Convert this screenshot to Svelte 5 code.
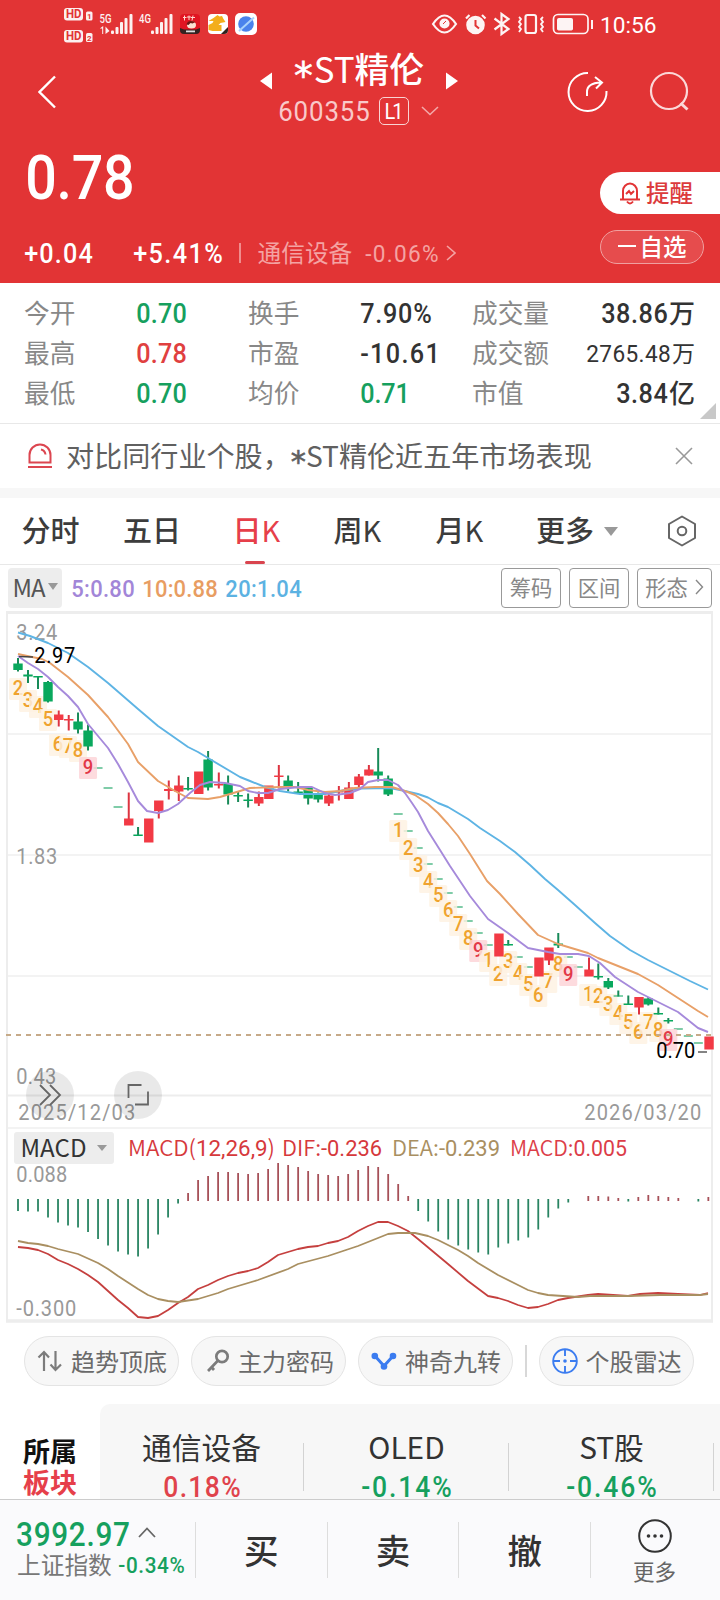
<script>
  const RED = '#e23435';
  const GREEN = '#16a05e';

  const stats = [
    [{ k: '今开', v: '0.70', w: 49, c: GREEN }, { k: '换手', v: '7.90%', w: 70 }, { k: '成交量', v: '38.86', w: 65, u: '万' }],
    [{ k: '最高', v: '0.78', w: 49, c: '#e0403f' }, { k: '市盈', v: '-10.61', w: 78 }, { k: '成交额', v: '2765.48', w: 83, u: '万', small: true }],
    [{ k: '最低', v: '0.70', w: 49, c: GREEN }, { k: '均价', v: '0.71', w: 48, c: GREEN }, { k: '市值', v: '3.84', w: 50, u: '亿' }]
  ];

  // [index, kind, bodyTop, bodyBottom, wickTop, wickBottom]
  const candles = [
    [0, 'g', 663.5, 670, 658, 671.5], [1, 'g', 674.5, 676.5, 670, 683], [2, 'g', 676, 677.5, 676, 689],
    [3, 'g', 682, 701.5, 681, 702.5], [4, 'r', 714.5, 720, 710.5, 726.5], [5, 'r', 719, 720.5, 715, 730.5],
    [6, 'g', 721.5, 729.5, 712.5, 733.5], [7, 'g', 730.5, 746.5, 724.5, 750.5],
    [11, 'r', 818.5, 825.5, 792.5, 825], [12, 'g', 834.5, 836, 827, 836], [13, 'r', 818.5, 842.5, 819, 842],
    [14, 'r', 800.5, 811, 801, 818.5], [15, 'r', 789, 791, 780.5, 799.5], [16, 'r', 785.5, 791.5, 775.5, 801],
    [17, 'g', 788, 789.5, 777, 790.5], [18, 'r', 771.5, 794, 772, 794], [19, 'g', 759.5, 787.5, 751, 790.5],
    [20, 'r', 784, 785.5, 772.5, 788.5], [21, 'g', 784, 794.5, 775.5, 804.5], [22, 'g', 795, 796.5, 791.5, 802],
    [23, 'g', 799.5, 801, 793.5, 807.5], [24, 'r', 797, 803.5, 791.5, 806], [25, 'r', 785.5, 799, 786, 799],
    [26, 'r', 775.5, 777, 765, 788.5], [27, 'g', 780.5, 787.5, 775.5, 791.5], [28, 'g', 791.5, 793, 782, 793.5],
    [29, 'g', 788, 798.5, 786, 804.5], [30, 'g', 795, 799.5, 792.5, 802.5], [31, 'r', 795.5, 803.5, 793.5, 806],
    [32, 'r', 791, 792.5, 786, 800.5], [33, 'r', 787.5, 799, 782, 799], [34, 'r', 776.5, 785, 774, 787.5],
    [35, 'r', 769.5, 775.5, 765, 775.5], [36, 'g', 771.5, 775.5, 748, 781.5], [37, 'g', 778.5, 794.5, 775.5, 796],
    [48, 'r', 933.5, 956.5, 934, 956], [49, 'g', 944, 945.5, 940, 945.5], [52, 'r', 957.5, 976.5, 958, 976],
    [53, 'r', 947.5, 960.5, 948, 965], [54, 'g', 943.5, 945.5, 933, 948], [57, 'r', 969.5, 976.5, 957.5, 976],
    [58, 'g', 976, 977.5, 963.5, 979.5], [59, 'g', 981, 987.5, 978, 989], [60, 'g', 995.5, 996.5, 990.5, 996.5],
    [61, 'g', 1003.5, 1005, 995.5, 1005], [62, 'r', 997, 1007.5, 997, 1014.5], [63, 'g', 998.5, 1004.5, 997, 1005.5],
    [64, 'g', 1013, 1014.5, 1007.5, 1014.5], [65, 'g', 1020, 1021.5, 1018, 1023.5], [69, 'r', 1036.5, 1049.5, 1037, 1049]
  ];

  const limits = [
    [8, 768], [9, 788], [10, 807], [38, 814], [39, 831], [40, 848], [41, 864], [42, 879], [43, 893], [44, 907],
    [45, 921], [46, 933], [47, 945], [50, 957], [51, 967], [55, 957], [56, 967], [66, 1029], [67, 1036], [68, 1043]
  ];

  // [index, digit, centre y]
  const marks = [
    [0, 2, 688], [1, 3, 700], [2, 4, 706], [3, 5, 719], [4, 6, 744], [5, 7, 746], [6, 8, 750], [7, 9, 767],
    [38, 1, 830], [39, 2, 848], [40, 3, 865], [41, 4, 881], [42, 5, 895], [43, 6, 910], [44, 7, 924], [45, 8, 938], [46, 9, 950],
    [47, 1, 960], [48, 2, 974], [49, 3, 961], [50, 4, 973], [51, 5, 984], [52, 6, 995], [53, 7, 981], [54, 8, 964], [55, 9, 974],
    [57, 1, 994], [58, 2, 996], [59, 3, 1004], [60, 4, 1013], [61, 5, 1022], [62, 6, 1032], [63, 7, 1022], [64, 8, 1030], [65, 9, 1039]
  ];

  const ma20 = '18,632.5 30,636 48,643 68,653 88,667 108,683 138,709 158,726 188,747 198,752 208,758 240,777 250,781 265,787 280,791 300,794 325,794 345,790 362,788.5 390,788 405,791 418,794 428,797.5 438,803 448,807 458,813 468,819 480,828 500,841 515,852 530,865 545,879 558,890 575,905 595,923 610,936 630,950 648,960 670,971 690,981 708,989.5';
  const ma10 = '18,654 32,657 42,659 50,663 68,677 88,695 108,717 128,744 138,762 158,781 175,791 188,798 208,799 220,797 240,791 250,788 280,787 295,787 308,790 325,792 340,791 355,788 375,787 392,787 405,791 415,795 428,804 438,813 448,824 458,836 470,854 487,881 500,894 518,914 538,935 558,944 588,953 598,958 618,966 638,974 658,985 678,998 698,1011 708,1017';
  const ma5 = '18,656 28,663 38,669 48,677 58,687 68,696 78,707 88,724 98,736 108,748 118,764 128,782 138,801 147,811 158,813 168,810 178,804 190,793 200,785 210,782 225,783 240,786 248,791 258,793 268,793 280,789 300,787 312,787 325,793 335,795 350,793 360,789 368,782 378,780 388,780 398,785 405,793 412,803 418,812 428,831 440,850 450,866 460,881 470,896 488,919 508,933 528,948 548,952 560,954 578,954 589,956 600,963 615,977 638,992 658,1002 678,1012 698,1028 708,1032';

  const dif = '18,1247 28,1248 38,1250 48,1254 58,1260 68,1264 78,1269 88,1275 98,1282 108,1291 118,1300 128,1308 138,1317 148,1318 158,1316 168,1310 178,1303 188,1297 198,1289 208,1285 218,1280 228,1276 238,1273 248,1271 258,1268 268,1262 278,1255 288,1252 298,1249 308,1247 318,1246 328,1243 338,1241 348,1237 358,1231 368,1226 378,1222 388,1222 398,1226 408,1231 418,1239 448,1264 468,1281 488,1296 498,1298 508,1301 518,1305 528,1308 538,1307 548,1304 558,1300 568,1298 588,1295 598,1294 628,1296 640,1294 658,1293 678,1294 700,1295 708,1293';
  const dea = '18,1241 28,1243 38,1244 48,1246 58,1249 78,1254 98,1263 108,1269 118,1276 138,1289 148,1295 158,1299 168,1301 178,1302 198,1299 218,1293 228,1289 258,1280 288,1269 298,1264 328,1256 358,1246 378,1238 388,1234 398,1233 415,1233 428,1236 438,1240 458,1250 468,1256 478,1263 498,1275 518,1285 528,1290 538,1293 548,1295 578,1297 590,1296 628,1296 660,1295 700,1295 708,1294';

  // Signed bar lengths in pixels, positive above the zero line; null leaves a gap.
  const hist = [-12, -12.5, -12.5, -18.5, -23.5, -26.5, -28.5, -33, -40, -46.5, -52.5, -55.5, -57.5, -49.5, -35.5, -18.5, -4.5,
    8, 21, 25, 29, 29, 28, 27, 28, 32, 38, 36, 34, 30, 27, 26, 25, 27, 31, 35, 34, 27, 17, 5,
    -12, -22.5, -32.5, -40.5, -46.5, -50.5, -53.5, -55.5, -48.5, -44.5, -41.5, -38.5, -30.5, -18.5, -9.5, -3.5, null,
    5, 5, 4.5, 3, -2.5, 4, 6, 5, 4, 3, null, -2.5, 4];

  const px = (i) => 18 + i * 10.005;

  // Horizontal squeeze that turns the numerals into a narrower face.
  const SQ = 0.92;

  const tabs = [
    { t: '分时', x: 21.5 }, { t: '五日', x: 123 }, { t: '日', k: true, x: 232.5, on: true },
    { t: '周', k: true, x: 333.5 }, { t: '月', k: true, x: 435.5 }, { t: '更多', x: 536 }
  ];
  const sectors = [
    { n: '通信设备', p: '0.18%', w: 76, c: '#e0434b' },
    { n: 'OLED', p: '-0.14%', w: 89, c: GREEN },
    { n: 'ST股', p: '-0.46%', w: 89, c: GREEN }
  ];
</script>

{#snippet fit(t, w, cap, color = '#333', weight = 500)}
  <svg class="fit" width={w} height={cap}>
    <text transform="scale({SQ} 1)" x={(-cap * 0.04) / SQ} y={cap} textLength={(w + cap * 0.08) / SQ} lengthAdjust="spacing" font-size={cap / 0.711} fill={color} font-weight={weight}>{t}</text>
  </svg>
{/snippet}

{#snippet label(t, x, y, w, color, weight = 400, cap = 15.5)}
  <text class="num" transform="translate({x + 0.3} {y}) scale({SQ} 1)" textLength={w / SQ} lengthAdjust="spacing" font-size={cap / 0.711} fill={color} font-weight={weight}>{t}</text>
{/snippet}

<div class="page">
  <header>
    <div class="status">
      <svg width="720" height="50" fill="#fff">
        <g opacity=".93">
          <rect x="64" y="8" width="19" height="12.5" rx="3" />
          <rect x="64" y="30" width="19" height="12.5" rx="3" />
          <rect x="86" y="11.5" width="6.5" height="9" rx="1.5" />
          <rect x="86" y="33" width="6.5" height="9" rx="1.5" />
          <g class="num" font-weight="700" fill={RED}>
            <text x="66" y="18.4" font-size="12" textLength="15.5" lengthAdjust="spacingAndGlyphs">HD</text>
            <text x="66" y="40.4" font-size="12" textLength="15.5" lengthAdjust="spacingAndGlyphs">HD</text>
            <text x="87" y="19" font-size="8">1</text>
            <text x="87" y="40.5" font-size="8">2</text>
          </g>
          <g class="num" font-weight="500" font-size="13">
            <text x="99.500" y="23" textLength="12" lengthAdjust="spacingAndGlyphs">5G</text>
            <text x="139" y="23" textLength="12" lengthAdjust="spacingAndGlyphs">4G</text>
          </g>
          <path d="M102.200 34v-5.500h-2.400l3.400-2.500v8zM105.500 26.500v7.500l4-3z" />
          {#each [111, 151] as x}
            <rect {x} y="30.500" width="3" height="3.500" rx="1" />
            <rect x={x + 4.500} y="27" width="3" height="7" rx="1" />
            <rect x={x + 9} y="22" width="3" height="12" rx="1" />
            <rect x={x + 13.500} y="18" width="3" height="16" rx="1" />
            <rect x={x + 18.500} y="14" width="3" height="20" rx="1" />
          {/each}
        </g>
        <rect x="180" y="14" width="20" height="20" rx="4" fill="#e11522" />
        <path d="M180 28l4 1.500h12l4-1.500v2a4 4 0 0 1-4 4h-12a4 4 0 0 1-4-4z" fill="#342220" />
        <path d="M183 17.500h3.500m-2-2v5m4.500-5v4.500m-2-3h4m2-1.500l-1 5m-1-3h4" stroke="#ffd9cf" stroke-width="1" fill="none" />
        <ellipse cx="191.500" cy="25" rx="4.500" ry="3.500" fill="#fbe0d2" />
        <path d="M186.500 24.500q1-5.500 9-2.500l-3 1.500-2-.5-2 2z" fill="#6c1714" />
        <rect x="186" y="30.500" width="9" height="1.800" fill="#ddd" />
        <rect x="208" y="14" width="20" height="20" rx="4" />
        <path d="M208.500 21l5-3 4-3 2 1.500 2.500-.5 1.500 3 2 3-5 1-2 2h3v6h-9l-4-1v-5l4-2 1-2h-4z" fill="#f3ae1c" />
        <path d="M228 27v3a4 4 0 0 1-4 4h-3z" fill="#30231d" />
        <rect x="235" y="13" width="22" height="22" rx="5" />
        <circle cx="246" cy="24" r="7.800" fill="#4a82ec" />
        <path d="M239 31L254 17.500" stroke="#a9d2fb" stroke-width="2" />
        <g fill="none" stroke="#fff" stroke-width="2.200" opacity=".95">
          <path d="M433 24q11.500-17 23 0q-11.500 17-23 0z" />
          <circle cx="444.500" cy="23.500" r="4" fill="#fff" />
          <path d="M443 24l3-3" stroke={RED} stroke-width="1" />
          <circle cx="475.500" cy="25" r="8.200" fill="#fff" />
          <path d="M466 18.500l3.500-3.500m12.500 0l3.500 3.500" />
          <path d="M475.500 20v5.500l3.500 3" stroke={RED} stroke-width="2" />
          <path d="M494.500 18.500l14 10.500-7 5v-20l7 5-14 10.500" />
          <rect x="525.500" y="15" width="10.500" height="18" rx="2" />
          <path d="M519 17l2 2-2 3 2 2-2 3 2 2-2 3M543 17l-2 2 2 3-2 2 2 3-2 2 2 3" stroke-width="1.800" />
          <rect x="553.500" y="14.500" width="34.500" height="19" rx="4.500" stroke-width="1.700" />
          <rect x="557.500" y="18.500" width="15" height="11.500" rx="1" fill="#fff" stroke-width="1" />
          <path d="M592 20v9" stroke-width="2" />
        </g>
        <text class="num" x="600" y="32.800" font-size="22.500" textLength="56.500" lengthAdjust="spacingAndGlyphs">10:56</text>
      </svg>
    </div>

    <div class="title-row">
      <svg class="back" width="22" height="34" fill="none" stroke="#fff" stroke-width="2.400"><path d="M17 1.500L1.500 17 17 32.500" /></svg>
      <div class="title-block">
        <div class="title-line">
          <svg width="12" height="18" fill="#fff"><path d="M0 9L12 .5v17z" /></svg>
          <span class="title"><span class="star">*</span>ST<b>精伦</b></span>
          <svg width="12" height="18" fill="#fff"><path d="M12 9L0 .5v17z" /></svg>
        </div>
        <div class="code-line">
          {@render fit('600355', 90, 20, '#f9c9c9', 400)}
          <span class="level">{@render fit('L1', 18, 15.5, '#fff', 400)}</span>
          <svg width="18" height="10" fill="none" stroke="#f3a9a9" stroke-width="1.600"><path d="M1 1l8 7.500L17 1" /></svg>
        </div>
      </div>
      <svg class="share" width="42" height="42" fill="none" stroke="#fff" stroke-width="2">
        <path d="M21 2a19 19 0 1 0 18.500 18" />
        <path d="M20 25v-4q0-9 14-9.500M28 6l7 5.500-6 6" />
      </svg>
      <svg class="search" width="42" height="42" fill="none" stroke="#fbd8d8" stroke-width="2.200">
        <circle cx="20" cy="20" r="18" /><path d="M31.500 32l7 6.500" stroke-width="3" />
      </svg>
    </div>

    <div class="price-row">
      {@render fit('0.78', 106, 43, '#fff', 500)}
      <div class="alert">
        <svg width="22" height="25" fill="none" stroke={RED} stroke-width="2">
          <path d="M4 18V10a7 7.500 0 0 1 14 0v8M1 18.500h20M8 20.500q3 4 6 0M7 13l3-3 2 3 3-3" />
        </svg>
        <span>提醒</span>
      </div>
    </div>

    <div class="change-row">
      {@render fit('+0.04', 67, 19.5, '#fff', 500)}
      <span class="pct">{@render fit('+5.41%', 88, 19.5, '#fff', 500)}</span>
      <i></i>
      <span class="industry">通信设备</span>
      {@render fit('-0.06%', 72, 17.5, '#f4a3a3', 400)}
      <svg class="chev" width="10" height="16" fill="none" stroke="#f4a3a3" stroke-width="1.600"><path d="M1 1l8 7-8 7" /></svg>
      <div class="watch"><b></b>自选</div>
    </div>
  </header>

  <section class="stats">
    {#each stats as row}
      <div class="stat-row">
        {#each row as s}
          <span class="k">{s.k}</span>
          <span class="v">{@render fit(s.v, s.w, s.small ? 17.5 : 19.5, s.c ?? '#333', s.small ? 400 : 500)}{#if s.u}<em class:small={s.small}>{s.u}</em>{/if}</span>
        {/each}
      </div>
    {/each}
    <svg class="corner" width="16" height="16" fill="#c8c8c8"><path d="M16 0v16H0z" /></svg>
  </section>

  <section class="notice">
    <svg width="26" height="26" fill="none" stroke="#dc4650" stroke-width="2">
      <path d="M2.500 19.500V12a10.500 10.500 0 0 1 21 0v7.500zM1 24h24M14 6.500q4 1 4.500 5" />
    </svg>
    <span>对比同行业个股，<span class="star">*</span>ST精伦近五年市场表现</span>
    <svg class="close" width="18" height="18" fill="none" stroke="#999" stroke-width="1.600"><path d="M1 1l16 16M17 1L1 17" /></svg>
  </section>
  <div class="band"></div>

  <nav>
    <svg width="720" height="67">
      {#each tabs as t}
        <text class="cjk" x={t.x} y="44" font-size="29" font-weight="500" fill={t.on ? '#e63f4a' : '#3c3c3c'}>{t.t}{#if t.k}<tspan font-weight="400">K</tspan>{/if}</text>
      {/each}
      <path d="M604 29h14l-7 9z" fill="#999" />
      <rect x="245" y="63" width="20" height="3" rx="1.500" fill="#d9444e" />
      <path d="M682 18.500l13 7.500v14l-13 7.500-13-7.500v-14z" fill="none" stroke="#666" stroke-width="2" stroke-linejoin="round" />
      <circle cx="682" cy="33" r="4.300" fill="none" stroke="#666" stroke-width="2" />
    </svg>
  </nav>

  <section class="ma">
    <span class="select">MA<svg width="10" height="7" fill="#999"><path d="M0 0h10L5 7z" /></svg></span>
    {@render fit('5:0.80', 62, 17, '#a286d8', 500)}
    {@render fit('10:0.88', 74, 17, '#e89d62', 500)}
    {@render fit('20:1.04', 75, 17, '#5cb2e2', 500)}
    <div class="btns">
      <span>筹码</span><span>区间</span><span class="wide">形态<svg width="9" height="16" fill="none" stroke="#888" stroke-width="1.400"><path d="M1 1l6.500 7L1 15" /></svg></span>
    </div>
  </section>

  <svg class="chart" width="720" height="714" viewBox="0 610 720 714">
    <g fill="none" stroke="#ededed" stroke-width="2">
      <path d="M6 612.500H713" stroke-width="3" />
      <path d="M7 612V1322M712 612V1322" />
      <path d="M8 734H711M8 855H711M8 976H711" stroke="#f3f3f3" />
      <path d="M8 1095.500H711" />
      <path d="M8 1128H711" stroke="#f3f3f3" />
      <path d="M6 1321H713" stroke-width="3.500" />
    </g>
    {@render label('3.24', 16, 640, 41, '#999')}
    {@render label('1.83', 16, 864, 41, '#999')}
    {@render label('0.43', 16, 1084, 40, '#999')}

    {#each limits as [i, y]}
      <path d="M{px(i) - 4.5} {y}h9" stroke="#5fbf92" stroke-width="1.600" />
    {/each}
    {#each marks as [i, n, y]}
      <rect x={px(i) - 9} y={y - 10} width="18" height="22" rx="1.500" fill={n === 9 ? '#fcd3d7' : '#fef2e2'} opacity=".82" />
      <text class="num" transform="translate({px(i)} {y + 7}) scale(.92 1)" font-size="20" text-anchor="middle" font-weight="500" fill={n === 9 ? '#e23848' : '#efa22e'}>{n}</text>
    {/each}
    <path d="M6 1035H711" stroke="#c6aa88" stroke-width="2" stroke-dasharray="5 5" />
    {#each candles as [i, k, t, b, wt, wb]}
      <path d="M{px(i) + (k === 'r' ? 0.7 : 0)} {wt}V{wb}" stroke={k === 'r' ? '#dd3440' : '#178a58'} stroke-width="2" />
      <rect x={px(i) - (k === 'r' ? 4 : 4.7)} y={t} width="9.400" height={b - t} fill={k === 'r' ? '#f23a45' : '#09a85d'} />
    {/each}
    <g fill="none" stroke-width="1.900" stroke-linejoin="round">
      <polyline points={ma20} stroke="#5eb4e4" />
      <polyline points={ma10} stroke="#e8a068" />
      <polyline points={ma5} stroke="#a68adb" />
    </g>
    <path d="M19 656.500l14 .5" stroke="#444" stroke-width="1.500" />
    {@render label('2.97', 34, 663, 41, '#000')}
    {@render label('0.70', 656, 1058, 39, '#000')}
    <path d="M698 1052h9" stroke="#666" stroke-width="1.600" />

    {@render label('2025/12/03', 18, 1120, 117, '#999')}
    {@render label('2026/03/20', 584, 1120, 117, '#999')}
    <g fill="#000" fill-opacity=".085"><circle cx="50" cy="1095" r="24" /><circle cx="138" cy="1095" r="24" /></g>
    <path d="M40 1085l10 10-10 10M50 1085l10 10-10 10M128.500 1098v-13h13M135 1104.500h13v-13" fill="none" stroke="#666" stroke-width="1.800" />

    <rect x="14" y="1132" width="100" height="32" rx="3" fill="#ededed" />
    <text class="cjk" x="20.500" y="1157" font-size="24.500" textLength="66" lengthAdjust="spacingAndGlyphs" fill="#333">MACD</text>
    <path d="M97 1145h10l-5 6z" fill="#999" />
    <g class="mix" font-size="22">
      <text x="128" y="1156" textLength="147" lengthAdjust="spacingAndGlyphs" fill="#d6393c">MACD(<tspan class="num">12,26,9</tspan>)</text>
      <text x="282" y="1156" textLength="100" lengthAdjust="spacingAndGlyphs" fill="#d6393c">DIF:<tspan class="num">-0.236</tspan></text>
      <text x="392" y="1156" textLength="108" lengthAdjust="spacingAndGlyphs" fill="#a98f61">DEA:<tspan class="num">-0.239</tspan></text>
      <text x="510" y="1156" textLength="117" lengthAdjust="spacingAndGlyphs" fill="#dc3d48">MACD:<tspan class="num">0.005</tspan></text>
    </g>
    {@render label('0.088', 16, 1182, 51, '#999')}
    {@render label('-0.300', 16, 1316, 60, '#999')}
    {#each hist as h, i}
      {#if h !== null}
        <path d="M{px(i)} {h > 0 ? 1201 : 1199}v{-h}" stroke={h > 0 ? '#a65058' : '#298462'} stroke-width="1.800" />
      {/if}
    {/each}
    <g fill="none" stroke-width="1.800" stroke-linejoin="round">
      <polyline points={dif} stroke="#c5403f" />
      <polyline points={dea} stroke="#a98f61" />
    </g>
  </svg>

  <section class="tools">
    <span class="tool">
      <svg width="26" height="22" fill="none" stroke="#7c7c7c" stroke-width="2.200"><path d="M7 21V2M1.500 7.500L7 2l5 5.500M18.500 1v19M13.500 14.500l5 5.500 5.500-5.500" /></svg>趋势顶底
    </span>
    <span class="tool">
      <svg width="26" height="24" fill="none" stroke="#7c7c7c" stroke-width="2.700"><circle cx="18" cy="7.500" r="5.700" /><path d="M14 11.500L4 22M7 17.500l3 3.500M4 20l2 2" /></svg>主力密码
    </span>
    <span class="tool">
      <svg width="26" height="20" fill="none" stroke="#3b7cf0" stroke-width="3"><path d="M4 5l9 10 9-10" /><g fill="#3b7cf0" stroke="none"><circle cx="3.800" cy="5" r="3.300" /><circle cx="13" cy="15.500" r="3.300" /><circle cx="22" cy="5" r="3.300" /></g></svg>神奇九转
    </span>
    <i></i>
    <span class="tool">
      <svg width="26" height="26" fill="none" stroke="#3b7cf0" stroke-width="1.900"><circle cx="13" cy="13" r="11.800" /><path d="M13 1v7M13 18v7M1 13h7M18 13h7" /><circle cx="13" cy="13" r="1.800" fill="#3b7cf0" stroke="none" /></svg>个股雷达
    </span>
  </section>

  <section class="sectors">
    <div class="belong">所属<br /><span>板块</span></div>
    <div class="sector-list">
      {#each sectors as s}
        <div class="sector"><span>{s.n}</span>{@render fit(s.p, s.w, 20.5, s.c, 500)}</div>
      {/each}
    </div>
  </section>

  <footer>
    <div class="index">
      <div class="index-top">
        {@render fit('3992.97', 112, 23, GREEN, 500)}
        <svg width="18" height="11" fill="none" stroke="#666" stroke-width="1.800"><path d="M1 10l8-8.500 8 8.500" /></svg>
      </div>
      <div class="index-bottom"><span>上证指数</span>{@render fit('-0.34%', 65, 16, GREEN, 500)}</div>
    </div>
    <div class="act">买</div>
    <div class="act">卖</div>
    <div class="act">撤</div>
    <div class="more">
      <svg width="36" height="36" fill="none" stroke="#333" stroke-width="2"><circle cx="18" cy="18" r="15.800" /><g fill="#333" stroke="none"><circle cx="11.500" cy="18" r="1.800" /><circle cx="18" cy="18" r="1.800" /><circle cx="24.500" cy="18" r="1.800" /></g></svg>
      <span>更多</span>
    </div>
  </footer>
</div>

<style>
  :global(body) { margin: 0; background: #fff; }
  * { box-sizing: border-box; }
  svg { display: block; flex: none; }
  .page { width: 720px; height: 1600px; overflow: hidden; display: flex; flex-direction: column; font-family: 'Noto Sans CJK SC', sans-serif; background: #fff; }
  .fit { overflow: visible; }
  .fit text, .num { font-family: Roboto, sans-serif; }
  .cjk, .mix { font-family: 'Noto Sans CJK SC', sans-serif; }
  .mix .num { font-weight: 450; }
  .mix { font-weight: 350; }
  .star { display: inline-block; font-family: 'DejaVu Sans', sans-serif; font-size: 1.08em; line-height: 0; position: relative; top: .17em; -webkit-text-stroke: .6px currentColor; }

  header { height: 283px; background: #e23435; color: #fff; flex: none; }
  .status { height: 50px; }
  .title-row { height: 82px; display: flex; align-items: flex-start; }
  .back { margin: 25px 0 0 38px; }
  .title-block { width: 260px; margin-left: 168px; }
  .title-line { display: flex; align-items: center; height: 41px; padding: 0 30px 0 32px; justify-content: space-between; }
  .title-line svg { margin-top: 20px; }
  .title { font-size: 34.8px; line-height: 40px; margin-top: -5px; font-weight: 400; white-space: nowrap; }
  .title .star { margin-right: 1px; }
  .title b { font-weight: 500; }
  .code-line { display: flex; align-items: center; height: 40px; padding-left: 51px; }
  .level { width: 30px; height: 28px; margin: 0 12px 0 10px; border: 1.5px solid #f9d4d4; border-radius: 5px; display: flex; align-items: center; justify-content: center; }
  .share { margin: 21px 0 0 79px; }
  .search { margin: 21px 0 0 40px; }

  .price-row { height: 83px; display: flex; align-items: flex-start; padding: 24px 0 0 27px; justify-content: space-between; }
  .alert { width: 120px; height: 42px; margin-top: 16px; border-radius: 21px 0 0 21px; background: #fff; color: #dc3b3c; display: flex; align-items: center; padding-left: 19px; font-size: 23.5px; line-height: 40px; font-weight: 500; }
  .alert span { margin: -2px 0 0 5px; }
  .change-row { display: flex; align-items: center; height: 36px; margin-top: 20px; padding-left: 25px; }
  .pct { margin-left: 42px; }
  .change-row i { width: 1.5px; height: 20px; background: #f08d8d; margin: 0 17px 0 17px; }
  .industry { font-size: 23.7px; line-height: 34px; margin-top: -2px; color: #f4a3a3; margin-right: 14px; }
  .chev { margin-left: 8px; }
  .watch { width: 104px; height: 34px; margin: -13px 16px 0 auto; border: 1.5px solid #f0a0a0; background: #e64c4d; border-radius: 17px; font-size: 23.5px; line-height: 30px; font-weight: 500; display: flex; align-items: center; justify-content: center; gap: 4px; padding-bottom: 1px; }
  .watch b { width: 18px; height: 2px; background: #fff; }

  .stats { height: 141px; flex: none; border-bottom: 1.5px solid #e8e8e8; padding: 10px 24px 0; position: relative; }
  .stat-row { display: grid; grid-template-columns: 113px 111px 113px 111px 112px 111px; height: 40px; align-items: center; }
  .k { font-size: 25.7px; line-height: 38px; margin-top: -2px; color: #888; white-space: nowrap; }
  .v { display: flex; align-items: center; }
  .v:last-child { justify-content: flex-end; }
  em { font-style: normal; font-size: 26px; line-height: 38px; margin-top: -2px; font-weight: 500; color: #333; margin-left: 2px; }
  em.small { font-size: 23px; font-weight: 400; }
  .corner { position: absolute; right: 4px; bottom: 4px; }

  .notice { height: 64px; flex: none; display: flex; align-items: center; padding: 0 27px 0 27px; font-size: 28.1px; color: #606060; }
  .notice > span { margin: -3px 0 0 13px; line-height: 60px; white-space: nowrap; }
  .close { margin-left: auto; }
  .band { height: 10px; flex: none; background: #f7f7f7; }
  nav { height: 67px; flex: none; border-bottom: 1.5px solid #e8e8e8; }

  .ma { height: 45px; flex: none; display: flex; align-items: center; gap: 9px; padding: 1px 8px 0; }
  .select { width: 54px; height: 40px; background: #ededed; border-radius: 4px; color: #555; font-size: 24px; line-height: 36px; padding-bottom: 3px; display: flex; align-items: center; justify-content: center; gap: 3px; margin-right: 1px; letter-spacing: -1px; }
  .btns { margin-left: auto; display: flex; gap: 8px; }
  .btns span { width: 60px; height: 40px; border: 1.5px solid #999; border-radius: 4px; display: flex; align-items: center; justify-content: center; font-size: 21.3px; line-height: 34px; padding-bottom: 3px; color: #888; white-space: nowrap; }
  .btns .wide { width: 75px; gap: 7px; }
  .chart { flex: none; }

  .tools { flex: none; height: 62px; padding: 12px 0 0 24px; display: flex; align-items: flex-start; }
  .tool { width: 155px; height: 50px; border: 1.5px solid #e4e4e4; background: #f7f7f7; border-radius: 25px; display: flex; align-items: center; padding: 0 0 1px 12px; gap: 8px; font-size: 24px; line-height: 44px; color: #6a6a6a; margin-right: 12px; white-space: nowrap; }
  .tools i { width: 1.5px; height: 32px; background: #d8d8d8; margin: 9px 12px 0 0; }

  .sectors { flex: none; height: 95px; margin-top: 18px; display: flex; overflow: hidden; }
  .belong { width: 100px; padding: 31px 0 0 23px; font-size: 27px; line-height: 31px; font-weight: 700; color: #111; }
  .belong span { color: #e63f4a; }
  .sector-list { flex: 1; background: #f7f7f7; border-radius: 10px 0 0 0; display: flex; }
  .sector { width: 205px; flex: none; display: flex; flex-direction: column; align-items: center; position: relative; left: -1px; color: #333; }
  .sector span { font-size: 29.8px; line-height: 44px; margin: 20px 0 7.500px; }
  .sector::after { content: ''; position: absolute; right: 0; top: 39px; width: 1.5px; height: 48px; background: #d3d3d3; }

  footer { flex: none; height: 101px; border-top: 1.5px solid #ccc; background: #fafafc; display: flex; }
  .index { width: 195px; padding: 22px 0 0 17px; }
  .index-top { display: flex; align-items: center; gap: 9px; height: 24px; }
  .index-top svg:last-child { margin-top: -4px; }
  .index-bottom { display: flex; align-items: center; gap: 7px; height: 36px; margin-top: 1px; font-size: 23.7px; color: #777; }
  .index-bottom span { line-height: 34px; margin-top: -2px; }
  .act { width: 131.700px; height: 56px; margin-top: 22px; border-left: 1.5px solid #ddd; font-size: 34.500px; font-weight: 500; line-height: 54px; text-align: center; color: #333; }
  .more { flex: 1; height: 56px; margin-top: 22px; padding-right: 2px; border-left: 1.5px solid #ddd; display: flex; flex-direction: column; align-items: center; font-size: 21.500px; color: #666; }
  .more svg { margin-top: -4px; }
  .more span { line-height: 30px; margin-top: 2px; }
</style>
